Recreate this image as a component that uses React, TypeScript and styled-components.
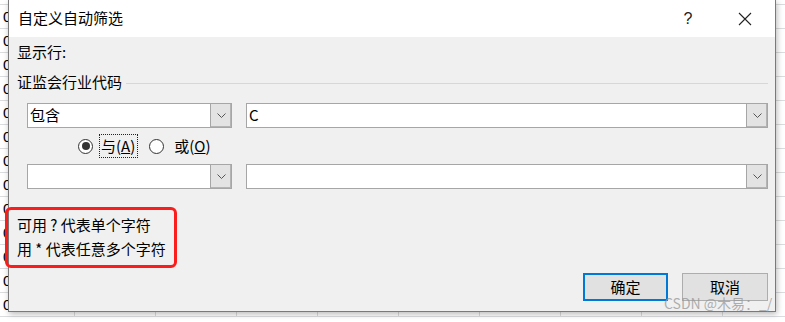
import React from "react";
import styled, { createGlobalStyle } from "styled-components";

const GlobalStyle = createGlobalStyle`
  html, body {
    margin: 0;
    padding: 0;
    background: #ffffff;
  }
  body {
    font-family: "Noto Sans CJK SC", "Noto Sans", sans-serif;
    color: #000;
  }
  * {
    box-sizing: border-box;
  }
`;

const Screen = styled.div`
  position: relative;
  width: 785px;
  height: 322px;
  overflow: hidden;
  background: #ffffff;
`;

// spreadsheet behind the dialog
const Sheet = styled.div`
  display: flex;
  flex-direction: column;
`;

const SheetRow = styled.div<{ $h: number }>`
  display: flex;
  height: ${(p) => p.$h}px;
  border-bottom: 1px solid #dadcdd;
`;

const SheetCell = styled.div<{ $w: number }>`
  width: ${(p) => p.$w}px;
  flex-shrink: 0;
  border-right: 1px solid #dadcdd;
  padding-left: 3px;
  font-family: "Liberation Sans", "Noto Sans", sans-serif;
  font-size: 15px;
  line-height: 23px;
`;

const Dialog = styled.div`
  position: absolute;
  left: 8px;
  top: 0;
  width: 768px;
  height: 312px;
  display: flex;
  flex-direction: column;
  border: 1px solid #7a7a7a;
  border-top: none;
  background: #f0f0f0;
  box-shadow: 1px 2px 6px rgba(0, 0, 0, 0.28);
`;

const TitleBar = styled.div`
  height: 37px;
  flex-shrink: 0;
  display: flex;
  align-items: center;
  padding: 0 7px 0 9px;
  background: #ffffff;
`;

const Title = styled.div`
  flex: 1;
  font-size: 15px;
  line-height: 20px;
  margin-top: -2px;
`;

const CaptionButton = styled.div`
  width: 46px;
  height: 30px;
  display: flex;
  align-items: center;
  justify-content: center;
  font-family: "Liberation Sans", sans-serif;
  font-size: 16px;
  color: #222;
  & + & {
    margin-left: 11px;
  }
`;

const Body = styled.div`
  flex: 1;
  display: flex;
  flex-direction: column;
  padding: 0 7px 0 8px;
  font-size: 15px;
`;

const Label = styled.div<{ $top: number }>`
  margin-top: ${(p) => p.$top}px;
  line-height: 20px;
  height: 20px;
`;

const GroupHeader = styled.div`
  display: flex;
  align-items: center;
  margin-top: 10px;
  height: 20px;
  line-height: 20px;
  &::after {
    content: "";
    flex: 1;
    height: 1px;
    margin-left: 4px;
    margin-top: 2px;
    background: #d7d7d7;
  }
`;

const FieldRow = styled.div<{ $top: number }>`
  display: flex;
  gap: 14px;
  margin: ${(p) => p.$top}px 0 0 10px;
  height: 25px;
`;

const Combo = styled.div<{ $w?: number }>`
  display: flex;
  height: 25px;
  ${(p) => (p.$w ? `width: ${p.$w}px;` : "flex: 1;")}
  border: 1px solid #a6a6a6;
  background: #ffffff;
`;

const ComboText = styled.div`
  flex: 1;
  padding-left: 2px;
  line-height: 22px;
  font-size: 15px;
`;

const DropButton = styled.div`
  width: 21px;
  display: flex;
  align-items: center;
  justify-content: center;
  background: #e3e3e3;
  border-left: 1px solid #a6a6a6;
  box-shadow: inset -1px -1px 0 #b4b4b4;
`;

const RadioRow = styled.div`
  display: flex;
  align-items: center;
  margin: 6px 0 0 61px;
  height: 24px;
`;

const RadioDot = styled.span<{ $checked?: boolean }>`
  position: relative;
  width: 15px;
  height: 15px;
  border-radius: 50%;
  border: 1px solid #333;
  background: #fff;
  flex-shrink: 0;
  &::after {
    content: "";
    display: ${(p) => (p.$checked ? "block" : "none")};
    position: absolute;
    left: 2.5px;
    top: 2.5px;
    width: 8px;
    height: 8px;
    border-radius: 50%;
    background: #333;
  }
`;

const RadioLabel = styled.span<{ $focused?: boolean; $gap: number }>`
  margin-left: ${(p) => p.$gap}px;
  padding: 0 2px 0 1px;
  height: 24px;
  line-height: 22px;
  border: 1px dotted ${(p) => (p.$focused ? "#222" : "transparent")};
  & + ${RadioDot} {
    margin-left: 11px;
  }
`;

const Hints = styled.div`
  margin-top: 26px;
  display: flex;
  flex-direction: column;
  gap: 4px;
  line-height: 20px;
`;

const ButtonRow = styled.div`
  display: flex;
  justify-content: flex-end;
  gap: 14px;
  margin-top: 14px;
`;

const DialogButton = styled.div<{ $primary?: boolean; $w: number }>`
  width: ${(p) => p.$w}px;
  height: 28px;
  display: flex;
  align-items: center;
  justify-content: center;
  background: #e1e1e1;
  border: ${(p) => (p.$primary ? "2px solid #0078d7" : "1px solid #adadad")};
  font-size: 15px;
  line-height: 18px;
`;

const Annotation = styled.div`
  position: absolute;
  left: 5px;
  top: 207px;
  width: 172px;
  height: 61px;
  border: 3px solid #fb1c1c;
  border-radius: 6px;
`;

const Watermark = styled.div`
  position: absolute;
  left: 664px;
  top: 295px;
  font-size: 14px;
  line-height: 16px;
  color: rgba(150, 150, 150, 0.75);
  white-space: nowrap;
`;

const Chevron = () => (
  <svg width="9" height="5" viewBox="0 0 9 5">
    <polyline points="0.5,0.5 4.5,4.5 8.5,0.5" fill="none" stroke="#555" strokeWidth="1" />
  </svg>
);

const CloseIcon = () => (
  <svg width="14" height="14" viewBox="0 0 14 14">
    <path d="M1 1 L13 13 M13 1 L1 13" stroke="#222" strokeWidth="1.1" fill="none" />
  </svg>
);

const columns = [75, 81, 81, 81, 81, 81, 81, 81, 81, 81, 81];

export default function App() {
  return (
    <Screen>
      <GlobalStyle />
      <Sheet>
        <SheetRow $h={5}>
          {columns.map((w, i) => (
            <SheetCell key={i} $w={w} />
          ))}
        </SheetRow>
        {Array.from({ length: 13 }).map((_, r) => (
          <SheetRow key={r} $h={24}>
            {columns.map((w, i) => (
              <SheetCell key={i} $w={w}>
                {i === 0 ? "0" : ""}
              </SheetCell>
            ))}
          </SheetRow>
        ))}
      </Sheet>

      <Dialog>
        <TitleBar>
          <Title>自定义自动筛选</Title>
          <CaptionButton>?</CaptionButton>
          <CaptionButton>
            <CloseIcon />
          </CaptionButton>
        </TitleBar>
        <Body>
          <Label $top={5}>显示行:</Label>
          <GroupHeader>证监会行业代码</GroupHeader>
          <FieldRow $top={11}>
            <Combo $w={205}>
              <ComboText>包含</ComboText>
              <DropButton>
                <Chevron />
              </DropButton>
            </Combo>
            <Combo>
              <ComboText>C</ComboText>
              <DropButton>
                <Chevron />
              </DropButton>
            </Combo>
          </FieldRow>
          <RadioRow>
            <RadioDot $checked />
            <RadioLabel $focused $gap={6}>
              与(<u>A</u>)
            </RadioLabel>
            <RadioDot />
            <RadioLabel $gap={8}>
              或(<u>O</u>)
            </RadioLabel>
          </RadioRow>
          <FieldRow $top={6}>
            <Combo $w={205}>
              <ComboText />
              <DropButton>
                <Chevron />
              </DropButton>
            </Combo>
            <Combo>
              <ComboText />
              <DropButton>
                <Chevron />
              </DropButton>
            </Combo>
          </FieldRow>
          <Hints>
            <div>可用 ? 代表单个字符</div>
            <div>用 * 代表任意多个字符</div>
          </Hints>
          <ButtonRow>
            <DialogButton $primary $w={85}>
              确定
            </DialogButton>
            <DialogButton $w={86}>取消</DialogButton>
          </ButtonRow>
        </Body>
      </Dialog>

      <Annotation />
      <Watermark>CSDN @木易：_/</Watermark>
    </Screen>
  );
}
